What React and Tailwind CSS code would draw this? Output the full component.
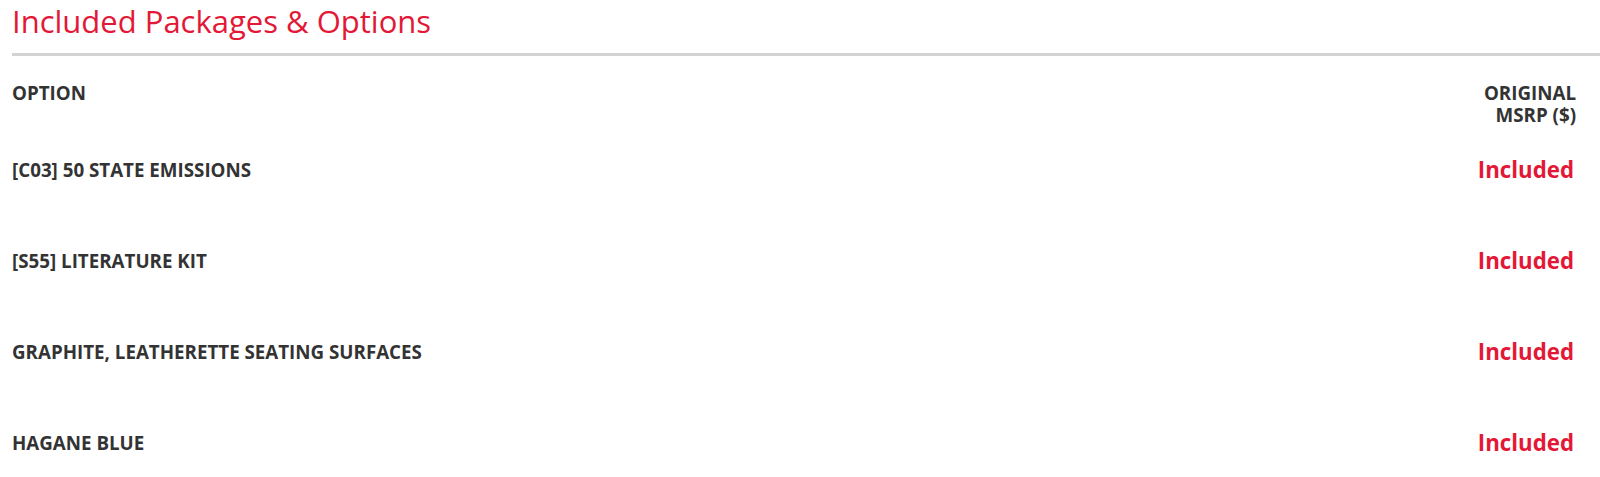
import React from 'react';

const options = [
  '[C03] 50 STATE EMISSIONS',
  '[S55] LITERATURE KIT',
  'GRAPHITE, LEATHERETTE SEATING SURFACES',
  'HAGANE BLUE',
];

export default function App() {
  return (
    <div className="min-h-screen bg-white pl-3 font-['Open_Sans',sans-serif] text-[#333333]">
      <h2 className="text-[31px] leading-[42px] font-normal text-[#e31837]">Included Packages &amp; Options</h2>
      <div className="mt-[11px] h-[3px] bg-[#d3d3d3]" />

      <div className="mt-[26px] flex items-start justify-between pr-[24px] text-[18.75px] font-bold leading-[22px]">
        <div>OPTION</div>
        <div className="text-right">
          ORIGINAL
          <br />
          MSRP ($)
        </div>
      </div>

      {options.map((name) => (
        <div key={name} className="flex h-[91px] items-center justify-between pt-[33px] pb-[36px] pr-[26px]">
          <div className="text-[18.75px] font-bold leading-[22px]">{name}</div>
          <div className="text-[22.25px] font-bold leading-[22px] text-[#e31837]">Included</div>
        </div>
      ))}
    </div>
  );
}
